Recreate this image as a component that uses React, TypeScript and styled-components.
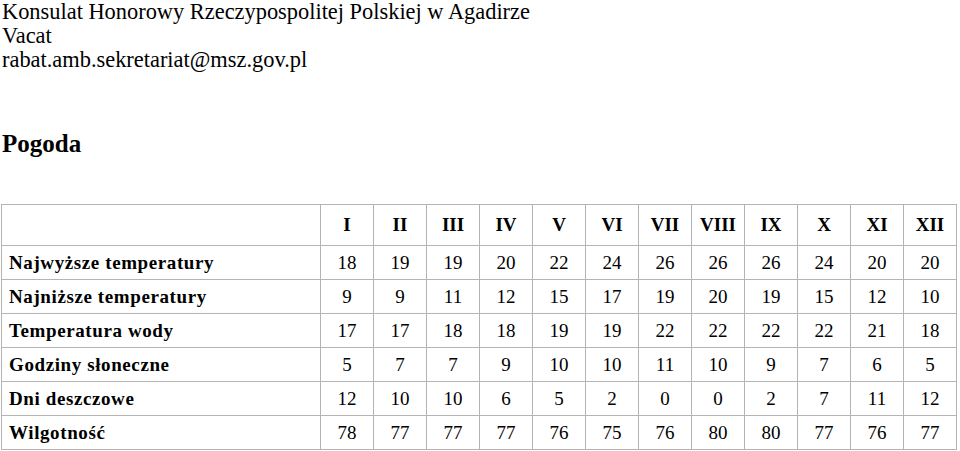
import styled, { createGlobalStyle } from "styled-components";

const GlobalStyle = createGlobalStyle`
  html, body {
    margin: 0;
    padding: 0;
    background: #ffffff;
  }
  body {
    color: #000000;
    font-family: "Liberation Serif", "Times New Roman", serif;
  }
`;

const Page = styled.div`
  padding: 0 5px 0 1px;
`;

const Contact = styled.div`
  font-size: 22.4px;
  line-height: 24px;
  padding-left: 1px;
`;

const Heading = styled.h2`
  font-size: 25px;
  font-weight: bold;
  line-height: 29px;
  margin: 57px 0 46px 1px;
`;

const Table = styled.table`
  border-collapse: collapse;
  width: 954px;
  table-layout: fixed;
  font-size: 19px;
`;

const LabelCol = styled.col`
  width: 319px;
`;

const MonthCol = styled.col`
  width: 53px;
`;

const Cell = styled.td<{ $head?: boolean; $label?: boolean }>`
  border: 1px solid #b4b4b4;
  height: ${(p) => (p.$head ? "40px" : "33px")};
  padding: 0;
  text-align: ${(p) => (p.$label ? "left" : "center")};
  padding-left: ${(p) => (p.$label ? "7px" : "0")};
  font-weight: ${(p) => (p.$head || p.$label ? "bold" : "normal")};
  letter-spacing: ${(p) => (p.$label ? "0.6px" : "0")};
  vertical-align: middle;
  white-space: nowrap;
`;

const months = ["I", "II", "III", "IV", "V", "VI", "VII", "VIII", "IX", "X", "XI", "XII"];

const rows: { label: string; values: number[] }[] = [
  { label: "Najwyższe temperatury", values: [18, 19, 19, 20, 22, 24, 26, 26, 26, 24, 20, 20] },
  { label: "Najniższe temperatury", values: [9, 9, 11, 12, 15, 17, 19, 20, 19, 15, 12, 10] },
  { label: "Temperatura wody", values: [17, 17, 18, 18, 19, 19, 22, 22, 22, 22, 21, 18] },
  { label: "Godziny słoneczne", values: [5, 7, 7, 9, 10, 10, 11, 10, 9, 7, 6, 5] },
  { label: "Dni deszczowe", values: [12, 10, 10, 6, 5, 2, 0, 0, 2, 7, 11, 12] },
  { label: "Wilgotność", values: [78, 77, 77, 77, 76, 75, 76, 80, 80, 77, 76, 77] },
];

export default function App() {
  return (
    <Page>
      <GlobalStyle />
      <Contact>
        <div>Konsulat Honorowy Rzeczypospolitej Polskiej w Agadirze</div>
        <div>Vacat</div>
        <div>rabat.amb.sekretariat@msz.gov.pl</div>
      </Contact>
      <Heading>Pogoda</Heading>
      <Table>
        <colgroup>
          <LabelCol />
          {months.map((m) => (
            <MonthCol key={m} />
          ))}
        </colgroup>
        <tbody>
          <tr>
            <Cell $head />
            {months.map((m) => (
              <Cell $head key={m}>
                {m}
              </Cell>
            ))}
          </tr>
          {rows.map((row) => (
            <tr key={row.label}>
              <Cell $label>{row.label}</Cell>
              {row.values.map((v, i) => (
                <Cell key={i}>{v}</Cell>
              ))}
            </tr>
          ))}
        </tbody>
      </Table>
    </Page>
  );
}
